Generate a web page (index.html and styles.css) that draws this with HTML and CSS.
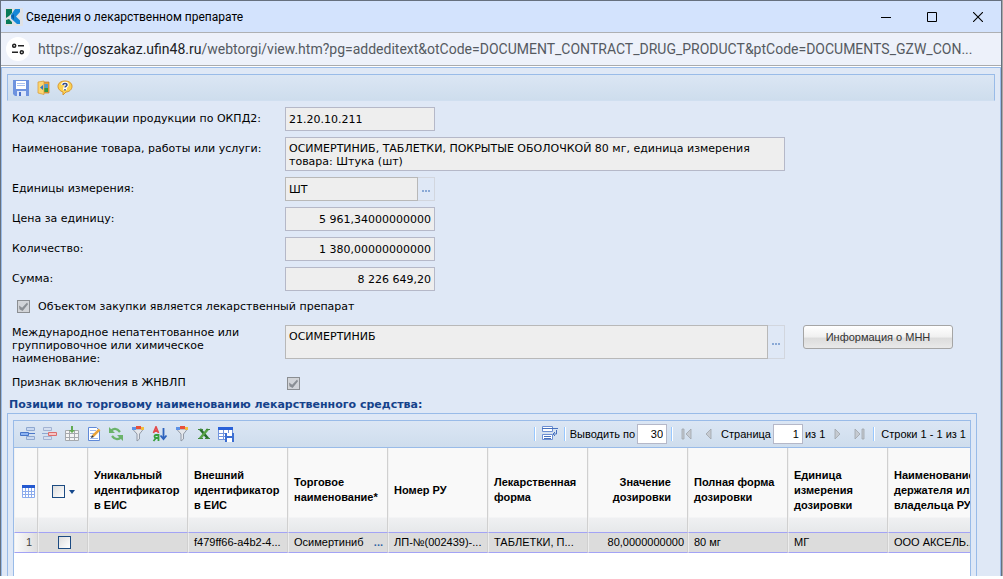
FILE: index.html
```html
<!DOCTYPE html>
<html lang="ru">
<head>
<meta charset="utf-8">
<title>Сведения о лекарственном препарате</title>
<link rel="stylesheet" href="styles.css">
</head>
<body>
<div class="window">
  <header class="titlebar">
    <svg class="app-icon" width="18" height="18" viewBox="0 0 18 18"><path fill="#dfe1e5" d="M0 0h18v18H0z"/><path fill="#087a58" d="M1 1h6v4L4 8 1 10zM1 12l3-1 3 3v2H1z"/><path fill="#1688d8" d="M10 1h5v3l-4 4.500 4 4V16h-3L6 10.500V7z"/><path fill="#0b5fa8" d="M6 8l3-2v6z"/></svg>
    <span class="title">Сведения о лекарственном препарате</span>
    <div class="window-controls">
      <button type="button" aria-label="Свернуть"><svg width="10" height="10" viewBox="0 0 10 10"><path d="M0 5.5h10" stroke="#000"/></svg></button>
      <button type="button" aria-label="Развернуть"><svg width="10" height="10" viewBox="0 0 10 10"><path d="M.5.5h9v9h-9z" fill="none" stroke="#000"/></svg></button>
      <button type="button" aria-label="Закрыть"><svg width="10" height="10" viewBox="0 0 10 10"><path d="M0 0l10 10M10 0L0 10" stroke="#000" stroke-width="1.1"/></svg></button>
    </div>
  </header>
  <div class="addressbar">
    <button type="button" class="site-info" aria-label="Сведения о сайте"><svg width="12" height="12" viewBox="0 0 12 12" fill="none" stroke="#222" stroke-width="1.5"><circle cx="2.2" cy="2.8" r="1.5"/><path d="M6 2.8h6M0 9.2h6"/><circle cx="9.8" cy="9.2" r="1.5"/></svg></button>
    <div class="url">https://<b>goszakaz.ufin48.ru</b>/webtorgi/view.htm?pg=addeditext&amp;otCode=DOCUMENT_CONTRACT_DRUG_PRODUCT&amp;ptCode=DOCUMENTS_GZW_CON...</div>
  </div>

  <main class="page">
    <div class="toolbar">
      <button type="button" aria-label="Сохранить"><svg width="16" height="16" viewBox="0 0 16 16"><path fill="#6e93df" d="M0 0h16v16H2l-2-2z"/><path fill="#fff" d="M3 1h10v8H3z"/><path stroke="#a9c0ee" d="M4 3.5h8M4 5.5h8"/><path fill="#dce6fa" d="M4 11h9v5H4z"/><path fill="#4a70c8" d="M6 12h2v4H6z"/></svg></button>
      <button type="button" aria-label="Выход"><svg width="16" height="16" viewBox="0 0 16 16"><path fill="#e0a040" stroke="#c67a20" stroke-width=".7" d="M6 2h8v11H6z"/><path fill="#4f9bd0" d="M9 4h4v4H9z"/><path fill="#2f9a45" d="M9 8h4v4H9z"/><path fill="#fbd672" stroke="#d99a33" stroke-width=".7" d="M3 2l6-1v13.500L3 13z"/><path fill="#3575c0" d="M5 7.500L8 5v5z"/></svg></button>
      <button type="button" aria-label="Справка"><svg width="16" height="16" viewBox="0 0 16 16"><path fill="#fbd253" stroke="#d9962c" d="M8 1c4 0 7 2 7 5.300S12 12 9 12l-3 3v-3C3 11 1 9 1 6.500 1 3 4 1 8 1z"/><path fill="none" stroke="#fff" stroke-width="3.500" d="M6 5c0-2 4-2 4 0 0 1.500-2 1-2 3v2"/><path fill="none" stroke="#334a86" stroke-width="1.400" d="M6 5c0-2 4-2 4 0 0 1.500-2 1-2 2.500M8 9v1.400"/></svg></button>
    </div>

    <form class="form">
      <label for="okpd">Код классификации продукции по ОКПД2:</label>
      <input id="okpd" class="field short" value="21.20.10.211" readonly>

      <label for="name">Наименование товара, работы или услуги:</label>
      <textarea id="name" class="field area wide" readonly>ОСИМЕРТИНИБ, ТАБЛЕТКИ, ПОКРЫТЫЕ ОБОЛОЧКОЙ 80 мг, единица измерения товара: Штука (шт)</textarea>

      <label for="unit">Единицы измерения:</label>
      <div class="lookup short"><input id="unit" class="field" value="ШТ" readonly><button type="button" aria-label="Выбрать единицу"><i></i><i></i><i></i></button></div>

      <label for="price">Цена за единицу:</label>
      <input id="price" class="field short number" value="5 961,34000000000" readonly>

      <label for="qty">Количество:</label>
      <input id="qty" class="field short number" value="1 380,00000000000" readonly>

      <label for="sum">Сумма:</label>
      <input id="sum" class="field short number" value="8 226 649,20" readonly>

      <div class="check-row"><input type="checkbox" class="check" id="drug" checked disabled><label for="drug">Объектом закупки является лекарственный препарат</label></div>

      <label for="mnn" class="tall-label">Международное непатентованное или группировочное или химическое наименование:</label>
      <div class="mnn-row">
        <div class="lookup wide"><textarea id="mnn" class="field area" readonly>ОСИМЕРТИНИБ</textarea><button type="button" aria-label="Выбрать МНН"><i></i><i></i><i></i></button></div>
        <button type="button" class="info-button">Информация о МНН</button>
      </div>

      <label for="vital" class="vital-label">Признак включения в ЖНВЛП</label>
      <div class="vital"><input type="checkbox" class="check" id="vital" checked disabled></div>
    </form>

    <h2 class="section-title">Позиции по торговому наименованию лекарственного средства:</h2>

    <section class="grid-frame">
      <div class="grid">
        <div class="grid-toolbar">
          <div class="tools">
            <button type="button" aria-label="Добавить строку"><svg width="16" height="16" viewBox="0 0 16 16"><path fill="#c9d9f2" stroke="#8fa8d0" d="M6.500 1.500h8v3h-8zM6.500 10.500h8v3h-8z"/><path fill="#8db4f2" stroke="#4674c8" d="M.5 6.500h8v3h-8z"/><path stroke="#4c78c8" d="M9 7.500h6"/></svg></button>
            <button type="button" aria-label="Удалить строку"><svg width="16" height="16" viewBox="0 0 16 16"><path fill="#d5dff0" stroke="#a3b3d3" d="M1.500 1.500h8v3h-8zM1.500 10.500h8v3h-8z"/><path fill="#f5c5c5" stroke="#dc6b6b" d="M6.500 6.500h8v3h-8z"/><path stroke="#8fa8d0" d="M0 7.500h6"/></svg></button>
            <button type="button" aria-label="Вставить"><svg width="16" height="16" viewBox="0 0 16 16"><path fill="#f4f4f4" stroke="#a5a9ad" d="M1.500 4.500h13v10h-13zM1 7.500h14M1 11.500h14M5.500 5v10M10.500 5v10"/><path fill="#62aa51" d="M7 0h2v4h2L8 7 5 4h2z"/></svg></button>
            <button type="button" aria-label="Редактировать"><svg width="16" height="16" viewBox="0 0 16 16"><path fill="#fff" stroke="#5f89d8" d="M2.500 1.500h8l3 3v10h-11z"/><path stroke="#9cb8ec" d="M4 4.500h6M4 7.500h4M4 10.500h3M4 12.500h8"/><path stroke="#e8a33a" stroke-width="2.500" d="M7 10l6.500-6.500"/><path fill="#333" d="M5 12l1-3 2 2z"/></svg></button>
            <button type="button" aria-label="Обновить"><svg width="16" height="16" viewBox="0 0 16 16" fill="none" stroke="#6bb36b" stroke-width="2.300"><path d="M3 5c2-3 6-3 9 1M13 11c-2 3-6 3-9-1"/><path fill="#6bb36b" stroke="none" d="M1 1v6h6zM15 15V9H9z"/></svg></button>
            <button type="button" aria-label="Фильтр"><svg width="16" height="16" viewBox="0 0 16 16"><path fill="#e4e7ec" stroke="#929aa7" d="M2.500 3h11L9.500 8v5L7 15V8z"/><path fill="#5d91e6" d="M2 1h4v3H2z"/><path fill="#e8503a" d="M6 0h5v3H6z"/><path fill="#f2bd3d" d="M11 1h3v3h-3z"/></svg></button>
            <button type="button" aria-label="Сортировка"><svg width="16" height="16" viewBox="0 0 16 16" fill="none" stroke-width="1.800"><path stroke="#e34b4b" d="M1.500 7L4 1l2.500 6M2.300 5h3.500"/><path stroke="#38a03c" d="M6.500 15V9H4c-2 0-2 3 0 3h2M4 12l-2.500 3"/><path stroke="#2d62bd" d="M11.500 2v10M8.500 9.500l3 3.500 3-3.500"/></svg></button>
            <button type="button" aria-label="Сбросить фильтр"><svg width="16" height="16" viewBox="0 0 16 16"><path fill="#e4e7ec" stroke="#929aa7" d="M2.500 3h11L9.500 8v5L7 15V8z"/><path fill="#5d91e6" d="M2 1h4v3H2z"/><path fill="#e8503a" d="M6 0h5v3H6z"/><path fill="#f2bd3d" d="M11 1h3v3h-3z"/></svg></button>
            <button type="button" aria-label="Экспорт в Excel"><svg width="16" height="16" viewBox="0 0 16 16"><path stroke="#276d2b" stroke-width="2.600" d="M4 3l8 9.500"/><path stroke="#58a347" stroke-width="2.600" d="M12 3L4 12.500"/><path stroke="#3e883a" d="M2 3.500h5M10 3.500h4M2 12.500h5M9 12.500h5"/></svg></button>
            <button type="button" aria-label="Сохранить вид"><svg width="16" height="16" viewBox="0 0 16 16"><path fill="#fff" stroke="#7194dd" d="M.5 1.500h14v12H.5zM1 7.500h13M1 10.500h13M5.500 4v10M10.500 4v10"/><path fill="#2a61d8" d="M0 1h15v3H0z"/><path fill="#3b6ed2" d="M7 7h9v9H7z"/><path fill="#fff" d="M9 7h5v3H9zM9 12h5v4H9z"/></svg></button>
          </div>
          <div class="pager">
            <span class="sep"></span>
            <button type="button" class="wrap-button" aria-label="Перенос строк"><svg width="16" height="16" viewBox="0 0 16 16"><path fill="#fff" stroke="#6d8fd2" d="M.5.500h10v5H.5zM.5 8.500h10v5H.5z"/><path fill="none" stroke="#4771bd" d="M0 2.500h16M2 10.500h7M2 12.500h7M14.500 4v4h-3M13 6l-2 2 2 2"/></svg></button>
            <span class="sep"></span>
            <label for="per-page">Выводить по</label><input id="per-page" class="page-input" value="30">
            <span class="sep"></span>
            <button type="button" class="nav" aria-label="Первая страница"><svg width="12" height="12" viewBox="0 0 12 12"><path fill="#c5cad1" stroke="#a0a5ab" stroke-width=".8" d="M1 1h2v10H1zM10 1v10L5 6z"/></svg></button>
            <button type="button" class="nav" aria-label="Предыдущая страница"><svg width="12" height="12" viewBox="0 0 12 12"><path fill="#c5cad1" stroke="#a0a5ab" stroke-width=".8" d="M8 1v10L3 6z"/></svg></button>
            <label for="page">Страница</label><input id="page" class="page-input" value="1"><span>из 1</span>
            <button type="button" class="nav" aria-label="Следующая страница"><svg width="12" height="12" viewBox="0 0 12 12"><path fill="#c5cad1" stroke="#a0a5ab" stroke-width=".8" d="M4 1v10l5-5z"/></svg></button>
            <button type="button" class="nav" aria-label="Последняя страница"><svg width="12" height="12" viewBox="0 0 12 12"><path fill="#c5cad1" stroke="#a0a5ab" stroke-width=".8" d="M9 1h2v10H9zM2 1v10l5-5z"/></svg></button>
            <span class="sep"></span>
            <span class="rows">Строки 1 - 1 из 1</span>
          </div>
        </div>
        <div class="grid-body">
          <table>
            <colgroup><col class="c-num"><col class="c-check"><col><col><col><col><col><col><col><col><col></colgroup>
            <thead>
              <tr>
                <th class="icon-cell"><svg width="13" height="13" viewBox="0 0 13 13"><path fill="#fff" stroke="#8cabec" d="M.5.500h12v12H.5zM0 6.500h13M0 9.500h13M3.500 3v10M6.500 3v10M9.500 3v10"/><path fill="#2459d0" d="M0 0h13v3H0z"/></svg></th>
                <th class="check-cell"><div class="check-head"><input type="checkbox" class="box" aria-label="Выбрать все"><svg width="6" height="4" viewBox="0 0 6 4"><path fill="#15488c" d="M0 0h6L3 4z"/></svg></div></th>
                <th>Уникальный идентификатор в ЕИС</th>
                <th>Внешний идентификатор в ЕИС</th>
                <th>Торговое наименование*</th>
                <th>Номер РУ</th>
                <th>Лекарственная форма</th>
                <th class="value">Значение дозировки</th>
                <th>Полная форма дозировки</th>
                <th>Единица измерения дозировки</th>
                <th>Наименование держателя или владельца РУ</th>
              </tr>
            </thead>
            <tbody>
              <tr>
                <td class="row-num">1</td>
                <td class="check-cell"><input type="checkbox" class="box" aria-label="Выбрать строку 1"></td>
                <td></td>
                <td>f479ff66-a4b2-4...</td>
                <td><div class="trade"><span>Осимертиниб</span><button type="button" aria-label="Выбрать наименование">...</button></div></td>
                <td>ЛП-№(002439)-...</td>
                <td>ТАБЛЕТКИ, П...</td>
                <td class="amount">80,0000000000</td>
                <td>80 мг</td>
                <td>МГ</td>
                <td>ООО АКСЕЛЬ...</td>
              </tr>
            </tbody>
          </table>
        </div>
      </div>
    </section>
  </main>
</div>
</body>
</html>
```
FILE: styles.css
```css
* { box-sizing: border-box; }
body {
  margin: 0;
  min-height: 100vh;
  padding-bottom: 3px;
  display: flex;
  background: #fff;
  color: #000;
  font: 11px/13px "DejaVu Sans", Verdana, sans-serif;
}
button {
  margin: 0;
  padding: 0;
  border: 0;
  background: none;
  color: inherit;
  font: inherit;
}
svg { display: block; }
.window {
  flex: 1;
  min-width: 0;
  display: flex;
  flex-direction: column;
  margin-right: 1px;
  border: 1px solid #66707e;
  border-bottom: 0;
  box-shadow: 1px 0 #a9a9a9;
}
.titlebar {
  height: 32px;
  display: flex;
  align-items: center;
  padding-left: 4px;
  background: #d3e3fd;
  border-bottom: 1px solid #aeb0b3;
}
.title {
  margin-left: 3px;
  font: 12px/16px Roboto, "Noto Sans", sans-serif;
}
.window-controls { display: flex; margin-left: auto; }
.window-controls button {
  width: 46px;
  height: 31px;
  display: grid;
  place-items: center;
}
.addressbar {
  height: 33px;
  display: flex;
  align-items: center;
  gap: 8px;
  padding-left: 5px;
  background: #edf1fa;
  border-bottom: 1px solid #a9abad;
}
.site-info {
  width: 24px;
  height: 24px;
  flex: none;
  display: grid;
  place-items: center;
  border-radius: 50%;
  background: #fff;
}
.url {
  min-width: 0;
  overflow: hidden;
  color: #555a61;
  font: 14px/20px Roboto, "Open Sans", sans-serif;
  white-space: nowrap;
}
.url b { color: #202124; font-weight: 400; }
.page {
  flex: 1;
  min-width: 0;
  display: flex;
  flex-direction: column;
  margin-top: 1px;
  padding: 6px 5px 0;
  background: #dfe8f6;
  border: 1px solid #99bbe8;
  border-bottom: 0;
}
.toolbar {
  height: 27px;
  flex: none;
  display: flex;
  align-items: center;
  gap: 6px;
  padding-left: 5px;
  border: 1px solid #99bbe8;
  border-bottom: 1px solid #d0dff0;
  background: linear-gradient(#dbe6f4, #cedded);
}
.form {
  display: grid;
  grid-template-columns: 273px 1fr;
  row-gap: 6px;
  align-items: start;
  padding: 6px 5px 0;
}
.form > label { padding-top: 5px; }
.form > .tall-label { padding: 1px 30px 0 0; }
.field {
  height: 24px;
  padding: 1px 3px 0;
  border: 1px solid #b5b8c8;
  border-radius: 0;
  background: #eee;
  color: #000;
  font: inherit;
  outline: 0;
}
.short { width: 150px; }
.wide { width: 500px; max-width: 100%; }
.area { display: block; height: 34px; padding-top: 4px; resize: none; overflow: hidden; }
.number { text-align: right; }
.lookup { display: flex; }
.lookup .field { flex: 1; min-width: 0; border-color: #b8b8b8; }
.lookup button {
  width: 17px;
  display: flex;
  align-items: center;
  justify-content: center;
  gap: 1px;
  padding-top: 4px;
  border: 1px solid #d2d6de;
  border-left: 0;
}
.lookup i { width: 2px; height: 2px; background: #8aa9d6; }
.check-row {
  grid-column: 1 / -1;
  height: 22px;
  display: flex;
  align-items: center;
  gap: 8px;
  padding: 0 0 3px 5px;
}
.check {
  appearance: none;
  width: 13px;
  height: 13px;
  margin: 0;
  border: 1px solid #8b8e92;
  background: #d2d4d8;
}
.check::after {
  content: "";
  display: block;
  width: 9px;
  height: 9px;
  margin: 1px;
  background: #8b8f94;
  clip-path: polygon(0 40%, 35% 65%, 90% 5%, 100% 25%, 40% 100%, 5% 80%);
}
.mnn-row { display: flex; align-items: flex-start; gap: 18px; }
.info-button {
  width: 150px;
  height: 24px;
  border: 1px solid #a5a5a5;
  border-radius: 3px;
  background: linear-gradient(#fff, #f0f0f0 50%, #dcdcdc 55%, #e9e9e9);
  color: #333;
  font: 11px/15px "Liberation Sans", Arial, sans-serif;
}
.vital { display: flex; padding: 6px 0 0 2px; }
.section-title {
  margin: 8px 0 2px 2px;
  color: #15428b;
  font: bold 11px/13px "DejaVu Sans", Verdana, sans-serif;
}
.grid-frame {
  flex: 1;
  min-width: 0;
  display: flex;
  margin-right: 18px;
  padding: 6px 5px 0;
  border: 1px solid #99bbe8;
  border-bottom: 0;
}
.grid {
  flex: 1;
  min-width: 0;
  display: flex;
  flex-direction: column;
  border: 1px solid #99bbe8;
  border-bottom: 0;
  background: #fff;
  font: 11px/15px "Liberation Sans", Arial, sans-serif;
}
.grid-toolbar {
  height: 27px;
  display: flex;
  align-items: center;
  justify-content: space-between;
  padding: 0 4px 0 6px;
  background: linear-gradient(#dbe6f4, #cedded);
  border-bottom: 1px solid #99bbe8;
}
.tools { display: flex; gap: 6px; }
.pager { display: flex; align-items: center; gap: 2px; white-space: nowrap; }
.sep { width: 2px; height: 14px; margin: 0 2px; background: #98c8ff; border-right: 1px solid #fff; }
.wrap-button { padding: 0 2px; }
.page-input {
  width: 30px;
  height: 20px;
  padding: 0 3px;
  border: 1px solid #b5b8c8;
  background: #fff;
  font: inherit;
  text-align: right;
}
.nav { padding: 0 4px; }
.rows { padding-left: 2px; }
.grid-body { overflow: hidden; }
table { width: 974px; table-layout: fixed; border-collapse: separate; border-spacing: 0; }
.c-num { width: 24px; }
.c-check { width: 50px; }
th, td { border-right: 1px solid #d0d0d0; text-align: left; }
th {
  height: 84px;
  padding: 0 5px;
  background: linear-gradient(#f9f9f9 0 69px, #eff0f2 70px, #e6e8ea);
  border-left: 1px solid #f1f1f1;
}
th.value { padding: 0 16px; text-align: right; }
th.icon-cell { padding: 2px 0 0 7px; }
td {
  height: 21px;
  padding: 0 0 0 5px;
  border-top: 1px solid #a3a3f5;
  border-bottom: 1px solid #a3a3f5;
  border-left: 1px solid #ededed;
  background: #dcdcdc;
  overflow: hidden;
  white-space: nowrap;
}
.check-cell { padding: 0; }
.check-head { display: flex; align-items: center; justify-content: center; gap: 4px; padding-top: 3px; }
.box {
  appearance: none;
  display: block;
  width: 13px;
  height: 13px;
  border: 1px solid #1c4b82;
  background: linear-gradient(135deg, #ddd, #fff);
}
.check-head .box { margin: 0; }
td.check-cell .box { margin: 0 auto 0 19px; }
.row-num { padding: 0 5px 0 0; background: linear-gradient(90deg, #fafafa, #dedede); color: #444; text-align: right; }
.amount { padding: 0 3px 0 0; text-align: right; }
.trade { display: flex; justify-content: space-between; padding-right: 4px; }
.trade button { color: #3165a5; font-weight: bold; }
```
